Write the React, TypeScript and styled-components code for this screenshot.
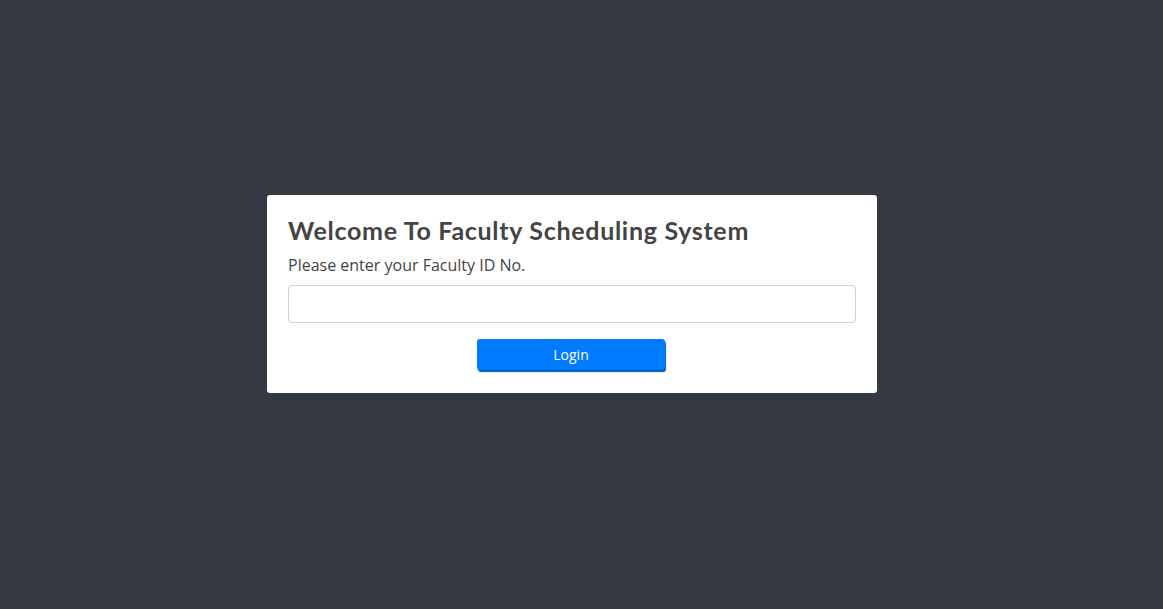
import React from "react";
import styled, { createGlobalStyle } from "styled-components";

const Global = createGlobalStyle`
  html, body { margin: 0; padding: 0; background: #353a42; }
  body { font-family: "Open Sans", "Noto Sans", sans-serif; }
  * { box-sizing: border-box; }
`;

const Page = styled.div`
  width: 1163px;
  height: 609px;
  background: #353a42;
  padding: 195px 0 0 267px;
`;

const Card = styled.div`
  width: 610px;
  background: #fff;
  border-radius: 3px;
  padding: 20px 21px 23px 21px;
  display: flex;
  flex-direction: column;
`;

const Title = styled.h1`
  margin: 0 0 8px 0;
  font-family: "Lato", "Noto Sans", sans-serif;
  font-weight: 700;
  font-size: 25px;
  letter-spacing: 0.7px;
  line-height: 30px;
  color: #444;
`;

const Label = styled.p`
  margin: 0 0 8px 0;
  font-size: 16px;
  line-height: 24px;
  color: #444;
`;

const Input = styled.input`
  height: 38px;
  width: 100%;
  border: 1px solid #ced4da;
  border-radius: 4px;
  padding: 6px 12px;
  font-size: 16px;
  font-family: inherit;
  outline: none;
`;

const Actions = styled.div`
  display: flex;
  justify-content: center;
  margin-top: 16px;
  padding-right: 2px;
`;

const Button = styled.button`
  width: 188px;
  height: 31px;
  background: #007bff;
  color: #fff;
  border: none;
  border-radius: 3px;
  box-shadow: 1px 2px 1px #0058b8;
  font-family: "Open Sans", sans-serif;
  font-size: 14px;
  padding: 0;
  cursor: pointer;
`;

export default function App() {
  return (
    <>
      <Global />
      <Page>
        <Card>
          <Title>Welcome To Faculty Scheduling System</Title>
          <Label>Please enter your Faculty ID No.</Label>
          <Input type="text" />
          <Actions>
            <Button>Login</Button>
          </Actions>
        </Card>
      </Page>
    </>
  );
}
